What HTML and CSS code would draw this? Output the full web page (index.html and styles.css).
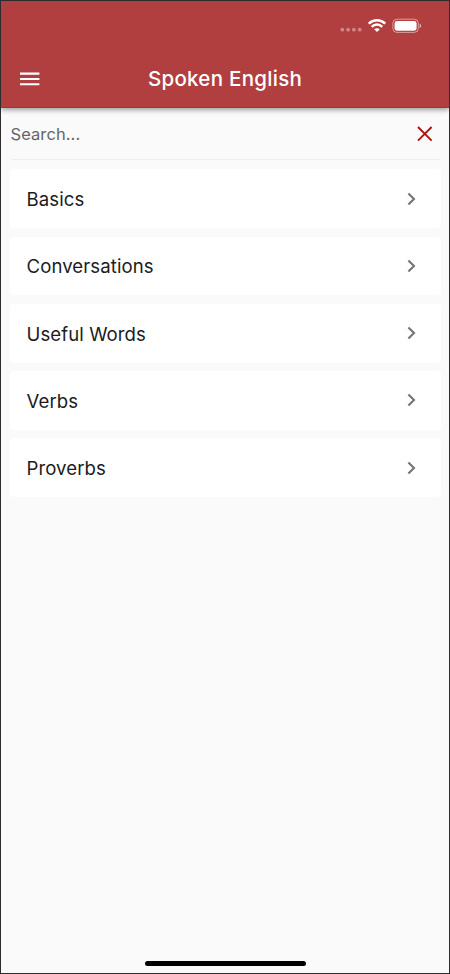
FILE: index.html
```html
<!DOCTYPE html>
<html lang="en">
<head>
<meta charset="utf-8">
<title>Spoken English</title>
<link rel="stylesheet" href="styles.css">
</head>
<body>
<div class="screen">
  <header class="header">
    <div class="status">
      <svg class="signal" width="22" height="5" viewBox="0 0 22 5"><circle cx="2.3" cy="2.7" r="1.9"/><circle cx="8.1" cy="2.7" r="1.9"/><circle cx="13.9" cy="2.7" r="1.9"/><circle cx="19.7" cy="2.7" r="1.9"/></svg>
      <svg class="wifi" width="18" height="15" viewBox="0 -.6 18 15" fill="none" stroke="#fff" stroke-width="2.5"><path d="M.8 5.1C5.4.5 12.6.5 17.2 5.1"/><path d="M3.7 8.2c3-3 7.6-3 10.6 0"/><path d="M6.2 10.7c1.6-1.5 4-1.5 5.6 0L9 13.5z" fill="#fff" stroke="none"/></svg>
      <svg class="battery" width="30" height="16" viewBox="0 0 30 16"><rect x=".9" y="1.2" width="25.4" height="13.2" rx="4" fill="none" stroke="#fff" stroke-opacity=".5" stroke-width="1"/><rect x="2.6" y="3.1" width="22" height="9.6" rx="2.4" fill="#fff"/><path d="M27.6 5.6c2 .8 2 3.8 0 4.6z" fill="#fff" fill-opacity=".6"/></svg>
    </div>
    <div class="toolbar">
      <svg class="menu" width="20" height="14" viewBox="0 0 20 14" fill="#fff"><path d="M0 .6h19.4v2.1H0zM0 5.9h19.4V8H0zM0 11.2h19.4v2.1H0z"/></svg>
      <h1 class="title">Spoken English</h1>
    </div>
  </header>
  <main class="content">
    <div class="search">
      <span class="placeholder">Search...</span>
      <svg class="clear" width="16" height="16" viewBox="0 0 16 16" stroke="#b0120f" stroke-width="1.9"><path d="M1 1l13.6 13.6M14.6 1L1 14.6"/></svg>
    </div>
    <ul class="list">
      <li class="card"><span>Basics</span><svg class="chevron" width="10" height="14" viewBox="0 0 10 14"><path d="M1.4 1.4L7 7l-5.6 5.6"/></svg></li>
      <li class="card"><span>Conversations</span><svg class="chevron" width="10" height="14" viewBox="0 0 10 14"><path d="M1.4 1.4L7 7l-5.6 5.6"/></svg></li>
      <li class="card"><span>Useful Words</span><svg class="chevron" width="10" height="14" viewBox="0 0 10 14"><path d="M1.4 1.4L7 7l-5.6 5.6"/></svg></li>
      <li class="card"><span>Verbs</span><svg class="chevron" width="10" height="14" viewBox="0 0 10 14"><path d="M1.4 1.4L7 7l-5.6 5.6"/></svg></li>
      <li class="card"><span>Proverbs</span><svg class="chevron" width="10" height="14" viewBox="0 0 10 14"><path d="M1.4 1.4L7 7l-5.6 5.6"/></svg></li>
    </ul>
  </main>
  <div class="home"></div>
</div>
</body>
</html>
```
FILE: styles.css
```css
* { box-sizing: border-box; }
body { margin: 0; font-family: Inter, "Liberation Sans", sans-serif; }
svg { display: block; flex: none; }
.screen {
  width: 450px;
  height: 974px;
  border: 1px solid #2e2c2e;
  background: #fafafa;
  display: flex;
  flex-direction: column;
  overflow: hidden;
}
.header {
  height: 107px;
  flex: none;
  background: #b13f3f;
  border-bottom: 1px solid #a93232;
  box-shadow: 0 2px 5px rgba(0, 0, 0, .3), 0 1px 6px rgba(0, 0, 0, .12);
}
.status {
  height: 49px;
  display: flex;
  justify-content: flex-end;
  padding: 17px 27px 0 0;
}
.signal { fill: #fff; fill-opacity: .38; margin: 9px 6px 0 0; }
.wifi { margin-right: 6px; }
.toolbar {
  height: 58px;
  display: grid;
  grid-template-columns: 80px 1fr 80px;
  align-items: center;
}
.menu { margin-left: 19px; }
.title {
  margin: 0;
  font-size: 20.5px;
  line-height: 24px;
  font-weight: 500;
  letter-spacing: .28px;
  text-align: center;
  color: #fff;
}
.content { flex: 1; padding: 0 8.5px; }
.search {
  height: 51.5px;
  margin: 0 1px;
  display: flex;
  align-items: center;
  justify-content: space-between;
  border-bottom: 1px solid #eee;
  padding: 1.5px 7px 0 0;
}
.placeholder { font-size: 16.5px; letter-spacing: .08px; color: #666; margin-top: -1px; }
.list {
  list-style: none;
  margin: 9.8px 0 0;
  padding: 0;
  display: grid;
  gap: 8.6px;
}
.card {
  height: 58.7px;
  background: #fff;
  border-radius: 4px;
  display: flex;
  align-items: center;
  justify-content: space-between;
  padding: 0 23.7px 0 17px;
  font-size: 18.6px;
  color: #1c1c1c;
  letter-spacing: .08px;
}
.card span { padding-top: 1px; }
.chevron { fill: none; stroke: #757575; stroke-width: 2.1; }
.home {
  width: 161px;
  height: 5px;
  border-radius: 3px;
  background: #000;
  align-self: center;
  margin-bottom: 7px;
}
```
